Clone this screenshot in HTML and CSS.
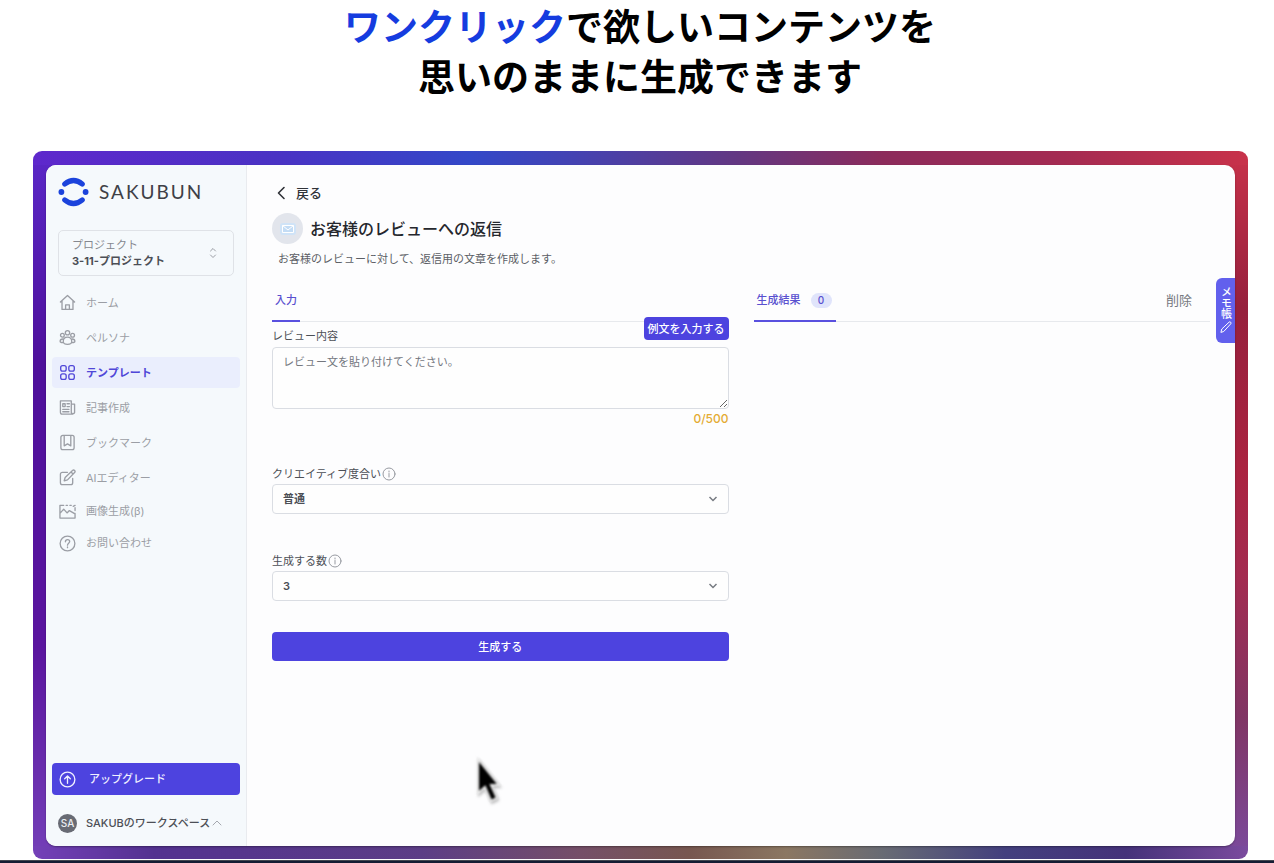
FILE: index.html
```html
<!DOCTYPE html>
<html lang="ja">
<head>
<meta charset="utf-8">
<title>SAKUBUN</title>
<link rel="stylesheet" href="styles.css">
</head>
<body>
<h1 class="headline"><span class="accent">ワンクリック</span>で欲しいコンテンツを<br>思いのままに生成できます</h1>
<section class="frame">
  <div class="app">
    <aside class="sidebar">
      <div class="brand">
        <svg class="logo" viewBox="0 0 32 30" fill="none" stroke="#1b43dc" stroke-width="5.4" stroke-linecap="round"><path d="M7 6.800Q16 -.5 25 6.800M7 23.200Q16 30.500 25 23.200"/><circle cx="3.500" cy="15" r="3" fill="#1b43dc" stroke="none"/><circle cx="28.500" cy="15" r="3" fill="#1b43dc" stroke="none"/></svg>
        <span class="brand-name">SAKUBUN</span>
      </div>
      <button class="project" type="button">
        <span class="project-text"><span class="project-label">プロジェクト</span><strong>3-11-プロジェクト</strong></span>
        <svg class="sorter" viewBox="0 0 8 12"><path d="M1.500 4 4 1.500 6.500 4M1.500 8 4 10.500 6.500 8"/></svg>
      </button>
      <nav class="nav">
        <a href="#" class="nav-item"><svg class="icon" viewBox="0 0 18 18"><path d="M1.500 8.500 9 1.500l7.500 7M3.200 7.500v8.800h11.600V7.500M7 16.300v-4.800h4v4.800"/></svg>ホーム</a>
        <a href="#" class="nav-item"><svg class="icon" viewBox="0 0 18 18"><circle cx="9" cy="4" r="2.300"/><circle cx="3.600" cy="6.600" r="2"/><circle cx="14.400" cy="6.600" r="2"/><path d="M9 8.600c3 0 4.500 2 4.500 4.600 0 2.200-2 3-4.500 3s-4.500-.8-4.500-3C4.500 10.600 6 8.600 9 8.600ZM4 10.600c-1.800 0-2.800 1-2.800 2.400 0 1 1.300 1.500 2.800 1.500M14 10.600c1.800 0 2.800 1 2.800 2.400 0 1-1.300 1.500-2.800 1.500"/></svg>ペルソナ</a>
        <a href="#" class="nav-item active"><svg class="icon" viewBox="0 0 18 18"><rect x="1.800" y="1.800" width="5.800" height="5.800" rx="2"/><rect x="10.400" y="1.800" width="5.800" height="5.800" rx="2"/><rect x="1.800" y="10.400" width="5.800" height="5.800" rx="2"/><rect x="10.400" y="10.400" width="5.800" height="5.800" rx="2"/></svg>テンプレート</a>
        <a href="#" class="nav-item"><svg class="icon" viewBox="0 0 18 18"><path d="M13 5.500h3.500v8.800a1.800 1.800 0 0 1-3.500 0V2H1.500v12a2 2 0 0 0 2 2h11.200M4 11h6.500M4 13.500h6.500M8.500 5H11M8.500 8H11"/><rect x="4" y="5" width="2.500" height="3"/></svg>記事作成</a>
        <a href="#" class="nav-item"><svg class="icon" viewBox="0 0 18 18"><rect x="2" y="1.500" width="14" height="15" rx="2"/><path d="M5.500 2v10.500L9 10.500l3.500 2V2"/></svg>ブックマーク</a>
        <a href="#" class="nav-item"><svg class="icon" viewBox="0 0 18 18"><path d="M9 3.500H3.500a2 2 0 0 0-2 2v9a2 2 0 0 0 2 2h9a2 2 0 0 0 2-2V10M5.500 12.500l1-3.500 7.800-7.400a1.500 1.500 0 0 1 2.200 2.200L9 11.500ZM12.800 3.200l2 2"/></svg>AIエディター</a>
        <a href="#" class="nav-item short"><svg class="icon" viewBox="0 0 18 18"><path d="M1 2.500v13.500h16v-5M1 11l4-4.500 3.500 4L11 8l6 3.500M1 2.500h4M7.500 2.500H9M11.500 2.500H13M15 3.500l2-1M17 5v3"/></svg>画像生成(β)</a>
        <a href="#" class="nav-item short"><svg class="icon" viewBox="0 0 18 18"><circle cx="9" cy="9" r="7.800"/><path d="M6.800 7.200C6.800 4 11.300 4.200 11.300 7c0 1.800-2.300 1.800-2.300 3.800M9 12.600v.8"/></svg>お問い合わせ</a>
      </nav>
      <button class="upgrade" type="button"><svg class="icon" viewBox="0 0 18 18"><circle cx="9" cy="9" r="7.800"/><path d="M9 13V5.500M6 8.200l3-3 3 3"/></svg>アップグレード</button>
      <button class="workspace" type="button"><span class="avatar">SA</span><span>SAKUBのワークスペース</span><svg class="caret" viewBox="0 0 10 8"><path d="M1 6 5 2l4 4"/></svg></button>
    </aside>
    <main class="main">
      <a href="#" class="back"><svg class="chevron" viewBox="0 0 10 14"><path d="M8 1.500 2.500 7 8 12.500"/></svg>戻る</a>
      <div class="title-row">
        <span class="badge"><svg class="mail" viewBox="0 0 18 14"><rect x="1" y="1" width="16" height="12" rx="3" fill="#cfe3f7"/><path d="M3.500 3.500h11v7h-11Z" fill="#c3dcf5" stroke="#fff"/><path d="M3.500 3.500 9 8l5.500-4.500" fill="none" stroke="#fff"/></svg></span>
        <h2>お客様のレビューへの返信</h2>
      </div>
      <p class="description">お客様のレビューに対して、返信用の文章を作成します。</p>
      <div class="columns">
        <form class="column">
          <div class="tabs"><button type="button" class="tab tab-input">入力</button></div>
          <div class="label-row">
            <label for="review">レビュー内容</label>
            <button type="button" class="example">例文を入力する</button>
          </div>
          <textarea id="review" class="control review" placeholder="レビュー文を貼り付けてください。"></textarea>
          <div class="counter">0/500</div>
          <div class="field">
            <label for="creative">クリエイティブ度合い<svg class="info" viewBox="0 0 14 14"><circle cx="7" cy="7" r="6"/><path d="M7 6.500V10M7 4v1"/></svg></label>
            <select id="creative" class="control"><option>普通</option></select>
          </div>
          <div class="field">
            <label for="count">生成する数<svg class="info" viewBox="0 0 14 14"><circle cx="7" cy="7" r="6"/><path d="M7 6.500V10M7 4v1"/></svg></label>
            <select id="count" class="control"><option>3</option></select>
          </div>
          <button type="button" class="generate">生成する</button>
        </form>
        <section class="column">
          <div class="tabs result-tabs">
            <button type="button" class="tab tab-result">生成結果<span class="count">0</span></button>
            <button type="button" class="delete">削除</button>
          </div>
        </section>
      </div>
    </main>
    <button type="button" class="memo"><span>メモ帳</span><svg class="pencil" viewBox="0 0 12 12"><path d="M1 11l.8-3L9 1.200a1 1 0 0 1 1.700 1.700L4 10.200Z"/></svg></button>
    <svg class="cursor" viewBox="0 0 28 48"><path d="M3 2v34l7-6 6 14 6-3-6-13h8Z" fill="#000" stroke="#ececec" stroke-width="2"/></svg>
  </div>
</section>
<footer class="footer"></footer>
</body>
</html>
```
FILE: styles.css
```css
* { box-sizing: border-box; }
body {
  margin: 0;
  min-height: 100vh;
  display: flex;
  flex-direction: column;
  background: #fff;
  color: #4c4f56;
  font: 11px/16px Inter, "Noto Sans CJK JP", sans-serif;
}
button, select, textarea { font: inherit; color: inherit; }
button { border: 0; background: none; padding: 0; }
a { color: inherit; text-decoration: none; }
svg { flex: none; }
.headline {
  margin: 0;
  padding: 0 0 51px 6px;
  text-align: center;
  color: #000;
  font: 700 37px/50px "Noto Sans CJK JP", sans-serif;
}
.accent { color: #153cdf; }
.frame {
  flex: 1;
  display: flex;
  margin: 0 26px 1px 33px;
  padding: 14px 13px 13px;
  border-radius: 9px;
  background:
    linear-gradient(90deg, #5e28cc, #4a32c4 20%, #3348c8 36%, #4343b4 44%, #633782 58%, #8c2b5b 70%, #a52b52 85%, #c8324a) top / 100% 14px no-repeat,
    linear-gradient(90deg, #7440b8, #533290 10%, #5c3d86 32%, #754f68 45%, #775750 54%, #8b7762 62%, #686b74 70%, #43407e 80%, #45327a 90%, #7b4b9e) bottom / 100% 13px no-repeat,
    linear-gradient(#5a28c8, #4e109b 30%, #5a159f 70%, #7440b8) left / 50% 100% no-repeat,
    linear-gradient(#c8324a, #96203d 22%, #aa2340 45%, #a32b50 60%, #803564 80%, #7b4b9e) right / 50% 100% no-repeat;
}
.app {
  position: relative;
  flex: 1;
  display: flex;
  border-radius: 10px;
  background: #fdfdfe;
  box-shadow: 0 1px 2px #0005;
}
.sidebar {
  width: 201px;
  display: flex;
  flex-direction: column;
  padding: 11px 6px 13px;
  border-right: 1px solid #e9ebef;
  border-radius: 10px 0 0 10px;
  background: #f5f9fc;
}
.brand { display: flex; align-items: center; gap: 10px; height: 32px; padding-left: 6px; }
.logo { width: 31px; height: 30px; }
.brand-name { color: #3e4046; font: 19px/30px Lato, sans-serif; letter-spacing: 2px; }
.project {
  display: flex;
  align-items: center;
  justify-content: space-between;
  height: 46px;
  margin: 22px 6px 11px;
  padding: 0 16px 0 13px;
  border: 1px solid #dfe2e7;
  border-radius: 5px;
  text-align: left;
}
.project-text { display: flex; flex-direction: column; }
.project-label { color: #85888f; }
.sorter { width: 8px; height: 12px; color: #9a9da4; }
.sorter, .icon, .caret, .chevron, .info, .pencil { fill: none; stroke: currentColor; stroke-linecap: round; stroke-linejoin: round; }
.icon { width: 17px; height: 17px; stroke-width: 1.400; }
.nav { flex: 1; }
.nav-item {
  display: flex;
  align-items: center;
  gap: 10px;
  height: 31px;
  margin-bottom: 4px;
  padding: 0 7px;
  border-radius: 4px;
  color: #9b9ea5;
}
.nav-item.short { height: 28px; }
.nav-item.active { background: #eaeefd; color: #5047d8; font-weight: 700; }
.upgrade {
  display: flex;
  align-items: center;
  gap: 13px;
  height: 32px;
  padding: 0 7px;
  border-radius: 4px;
  background: #4d43df;
  color: #f0f0ff;
  font-weight: 500;
}
.workspace { display: flex; align-items: center; height: 20px; margin-top: 18px; padding-left: 6px; font-weight: 500; }
.avatar { width: 19px; height: 19px; margin-right: 9px; border-radius: 50%; background: #686b74; color: #eceef2; font: 500 10px/19px Inter, sans-serif; }
.caret { width: 10px; height: 8px; margin-left: 2px; color: #a5a8af; }
.main { flex: 1; padding: 18px 25px; }
.back { display: flex; align-items: center; gap: 10px; height: 20px; padding-left: 4px; color: #303238; font-size: 13px; font-weight: 500; }
.chevron { width: 10px; height: 14px; stroke-width: 1.600; }
.title-row { display: flex; align-items: center; gap: 7px; margin-top: 10px; }
.badge { display: grid; place-items: center; width: 31px; height: 31px; border-radius: 50%; background: #e2e5ec; }
.mail { width: 18px; height: 14px; }
h2 { margin: 0; color: #25272d; font-size: 16px; line-height: 24px; font-weight: 500; }
.description { margin: 7px 0 0 6px; color: #5b5e65; }
.columns { display: grid; grid-template-columns: 1fr 1fr; gap: 25px; margin-top: 18px; }
.tabs { display: flex; height: 37px; border-bottom: 1px solid #e7e9ed; }
.tab { height: 37px; padding-bottom: 5px; border-bottom: 2px solid #5950df; color: #5950cf; font-weight: 500; }
.tab-input { width: 28px; }
.tab-result { display: flex; align-items: center; gap: 10px; padding: 0 4px 5px 3px; }
.count { width: 21px; height: 15px; border-radius: 8px; background: #e0e4fb; font-size: 10px; line-height: 15px; }
.result-tabs { justify-content: space-between; }
.delete { height: 30px; margin-right: 18px; color: #76797f; font-size: 13px; }
.label-row { display: flex; align-items: flex-end; justify-content: space-between; height: 22px; margin-bottom: 3px; }
.example { height: 23px; margin-bottom: 4px; padding: 0 4px; border-radius: 4px; background: #4d43df; color: #fff; font-weight: 500; }
.control { display: block; width: 100%; height: 30px; border: 1px solid #dadde3; border-radius: 4px; background-color: #fefefe; }
.review { height: 62px; padding: 6px 10px; resize: vertical; }
.review::placeholder { color: #74777e; opacity: 1; }
.counter { padding: 2px 0 36px; color: #e4ab32; font-size: 12px; text-align: right; font-weight: 500; }
.field { margin-bottom: 36px; }
.field + .generate { margin-top: -5px; }
.field label { display: flex; align-items: center; gap: 1px; height: 21px; }
.info { width: 14px; height: 14px; color: #979aa1; }
select.control {
  appearance: none;
  padding: 0 10px;
  font-weight: 600;
  background-image: url("data:image/svg+xml,%3Csvg xmlns='http://www.w3.org/2000/svg' viewBox='0 0 10 8'%3E%3Cpath d='M1.500 2 5 5.500 8.500 2' fill='none' stroke='%23777b82' stroke-width='1.500'/%3E%3C/svg%3E");
  background-repeat: no-repeat;
  background-position: right 10px center;
  background-size: 10px 8px;
}
.generate { width: 100%; height: 29px; border-radius: 4px; background: #4d43df; color: #fff; font-weight: 500; }
.memo {
  position: absolute;
  top: 113px;
  right: 0;
  display: flex;
  flex-direction: column;
  align-items: center;
  justify-content: center;
  gap: 2px;
  width: 19px;
  height: 65px;
  padding-bottom: 2px;
  border-radius: 6px 0 0 6px;
  background: #6260ed;
  color: #fff;
  font-weight: 500;
}
.memo span { writing-mode: vertical-rl; line-height: 16px; }
.pencil { width: 12px; height: 12px; }
.cursor { position: absolute; left: 429px; top: 592px; width: 28px; height: 48px; filter: blur(1px) drop-shadow(1px 2px 1px #0004); }
.footer { height: 3px; background: #151c33; border-top: 1px solid #434750; }
```
